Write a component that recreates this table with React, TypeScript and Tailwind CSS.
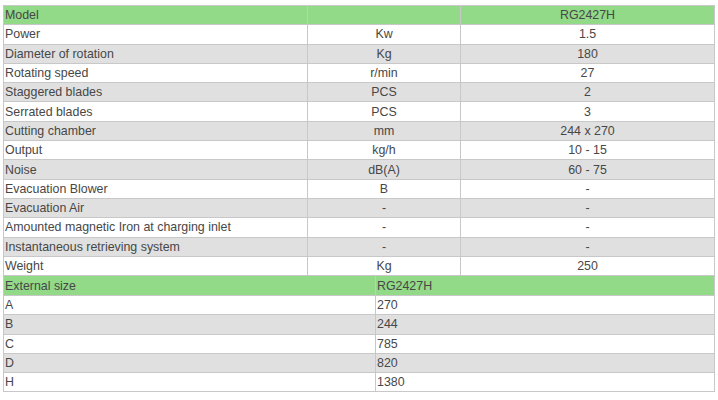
import React from 'react';

const specs: [string, string, string][] = [
  ['Power', 'Kw', '1.5'],
  ['Diameter of rotation', 'Kg', '180'],
  ['Rotating speed', 'r/min', '27'],
  ['Staggered blades', 'PCS', '2'],
  ['Serrated blades', 'PCS', '3'],
  ['Cutting chamber', 'mm', '244 x 270'],
  ['Output', 'kg/h', '10 - 15'],
  ['Noise', 'dB(A)', '60 - 75'],
  ['Evacuation Blower', 'B', '-'],
  ['Evacuation Air', '-', '-'],
  ['Amounted magnetic Iron at charging inlet', '-', '-'],
  ['Instantaneous retrieving system', '-', '-'],
  ['Weight', 'Kg', '250'],
];

const sizes: [string, string][] = [
  ['A', '270'],
  ['B', '244'],
  ['C', '785'],
  ['D', '820'],
  ['H', '1380'],
];

const cell = 'border border-[#c8c8c8] px-0 py-0 leading-[14px] h-[19.3px] align-middle';

export default function App() {
  return (
    <div className="w-[718px] h-[400px] bg-white pt-[5px] pl-[3px] text-[12.4px] text-[#474747]" style={{ fontFamily: '"Liberation Sans", Arial, sans-serif' }}>
      <table className="w-[711px] border-collapse table-fixed">
        <colgroup>
          <col className="w-[304px]" />
          <col className="w-[153px]" />
          <col className="w-[254px]" />
        </colgroup>
        <tbody>
          <tr className="bg-[#92d988]">
            <td className={`${cell} text-left pl-px`}>Model</td>
            <td className={cell}></td>
            <td className={`${cell} text-center`}>RG2427H</td>
          </tr>
          {specs.map(([name, unit, value], i) => (
            <tr key={name} className={i % 2 === 0 ? 'bg-white' : 'bg-[#e0e0e0]'}>
              <td className={`${cell} text-left pl-px`}>{name}</td>
              <td className={`${cell} text-center`}>{unit}</td>
              <td className={`${cell} text-center`}>{value}</td>
            </tr>
          ))}
        </tbody>
      </table>
      <table className="w-[711px] border-collapse table-fixed">
        <colgroup>
          <col className="w-[372px]" />
          <col className="w-[339px]" />
        </colgroup>
        <tbody>
          <tr className="bg-[#92d988]">
            <td className={`${cell} border-t-0 text-left pl-px`}>External size</td>
            <td className={`${cell} border-t-0 text-left pl-px`}>RG2427H</td>
          </tr>
          {sizes.map(([k, v], i) => (
            <tr key={k} className={i % 2 === 0 ? 'bg-white' : 'bg-[#e0e0e0]'}>
              <td className={`${cell} text-left pl-px`}>{k}</td>
              <td className={`${cell} text-left pl-px`}>{v}</td>
            </tr>
          ))}
        </tbody>
      </table>
    </div>
  );
}
